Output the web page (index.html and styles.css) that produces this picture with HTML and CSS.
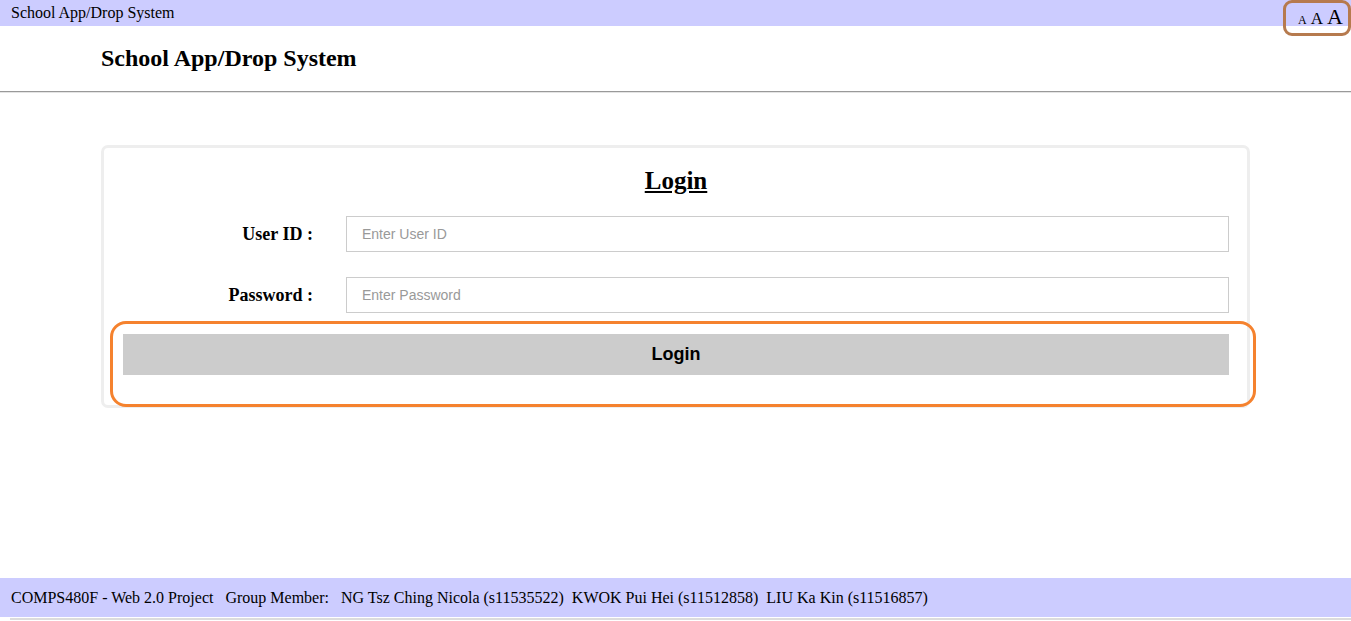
FILE: index.html
```html
<!DOCTYPE html>
<html>
<head>
<meta charset="utf-8">
<title>School App/Drop System</title>
<link rel="stylesheet" href="styles.css">
</head>
<body>
<div class="topbar">
  <span class="topbar-title">School App/Drop System</span>
  <div class="fontsizer">
    <span class="fs-s">A</span><span class="fs-m">A</span><span class="fs-l">A</span>
  </div>
</div>
<header class="header">
  <h2 class="site-title">School App/Drop System</h2>
</header>
<hr class="divider">
<main class="main">
  <div class="card">
    <h2 class="login-title">Login</h2>
    <form class="form">
      <label class="label">User ID :</label>
      <input class="input" type="text" placeholder="Enter User ID">
      <label class="label">Password :</label>
      <input class="input" type="password" placeholder="Enter Password">
      <div class="btn-wrap">
        <button type="button" class="btn">Login</button>
      </div>
    </form>
  </div>
</main>
<footer class="footer">COMPS480F - Web 2.0 Project&nbsp;&nbsp; Group Member:&nbsp;&nbsp; NG Tsz Ching Nicola (s11535522)&nbsp; KWOK Pui Hei (s11512858)&nbsp; LIU Ka Kin (s11516857)</footer>
<div class="bottom-line"></div>
</body>
</html>
```
FILE: styles.css
```css
html, body {
  margin: 0;
  padding: 0;
  background: #fff;
  color: #000;
  font-family: "Liberation Serif", "Times New Roman", serif;
}
body {
  height: 621px;
  display: flex;
  flex-direction: column;
  overflow: hidden;
}
.topbar {
  position: relative;
  height: 26px;
  background: #ccccff;
  font-size: 16px;
  line-height: 26px;
  padding-left: 11px;
}
.fontsizer {
  position: absolute;
  right: 0;
  top: 0;
  width: 50px;
  height: 30px;
  border: 3px solid #b67a4e;
  border-radius: 9px;
  display: flex;
  align-items: baseline;
  justify-content: flex-start;
  padding-left: 12px;
  box-sizing: content-box;
  gap: 4px;
  line-height: 27px;
  font-weight: normal;
}
.fs-s { font-size: 12px; }
.fs-m { font-size: 17px; }
.fs-l { font-size: 22px; }
.header {
  height: 65px;
  padding-left: 101px;
  display: flex;
  align-items: center;
}
.site-title {
  margin: 0;
  font-size: 24px;
  font-weight: bold;
}
.divider {
  margin: 0;
  border: 0;
  border-top: 1px solid #999;
  border-bottom: 1px solid #e4e4e4;
  height: 0;
}
.main {
  flex: 1;
  padding: 52px 101px 0 101px;
}
.card {
  position: relative;
  width: 1149px;
  box-sizing: border-box;
  border: 3px solid #eee;
  border-radius: 7px;
  padding: 16px 18px 30px 19px;
}
.login-title {
  margin: 0 0 18px 0;
  text-align: center;
  font-size: 25px;
  font-weight: bold;
  text-decoration: underline;
  line-height: 34px;
}
.form {
  display: grid;
  grid-template-columns: 190px 1fr;
  column-gap: 33px;
  row-gap: 25px;
  align-items: center;
}
.label {
  text-align: right;
  font-size: 18px;
  font-weight: bold;
}
.input {
  height: 36px;
  box-sizing: border-box;
  border: 1px solid #ccc;
  padding: 0 15px;
  font-family: "Liberation Sans", Arial, sans-serif;
  font-size: 14px;
  outline: none;
}
.input::placeholder {
  color: #999;
}
.btn-wrap {
  grid-column: 1 / 3;
  position: relative;
  margin-top: -4px;
}
.btn-wrap::after {
  content: "";
  position: absolute;
  left: -13px;
  right: -27px;
  top: -13px;
  bottom: -32px;
  border: 3px solid #f5822e;
  border-radius: 16px;
  pointer-events: none;
}
.btn {
  display: block;
  width: 100%;
  height: 41px;
  border: 0;
  background: #cccccc;
  font-family: "Liberation Sans", Arial, sans-serif;
  font-size: 18px;
  font-weight: bold;
  color: #000;
}
.footer {
  height: 39px;
  background: #ccccff;
  font-size: 16px;
  line-height: 39px;
  padding-left: 11px;
  white-space: nowrap;
}
.bottom-line {
  height: 2px;
  margin-top: 1px;
  margin-left: 10px;
  background: #dcdcdc;
  margin-bottom: 1px;
}
```
